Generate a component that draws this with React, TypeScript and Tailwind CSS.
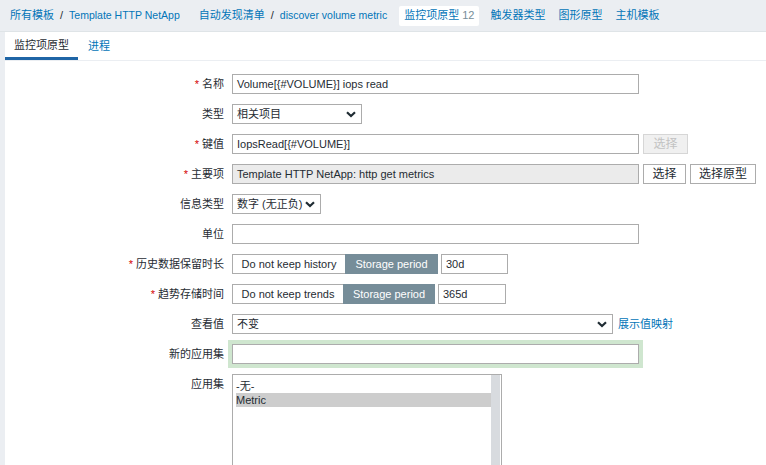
import React from "react";

const font = { fontFamily: '"Liberation Sans", Arial, "Noto Sans CJK SC", sans-serif' };

function Chevron() {
  return (
    <svg width="10" height="7" viewBox="0 0 10 7" className="shrink-0">
      <path d="M1 1.2 L5 5 L9 1.2" fill="none" stroke="#1f2c33" strokeWidth="2.2" />
    </svg>
  );
}

function Label({ text, req }: { text: string; req?: boolean }) {
  return (
    <div className="w-[224px] shrink-0 text-right leading-[20px] text-[#1f2c33]">
      {req && <span className="text-[#d40000]">* </span>}
      {text}
    </div>
  );
}

function Row({ children, label, req }: { children: React.ReactNode; label: string; req?: boolean }) {
  return (
    <div className="flex items-start gap-2">
      <Label text={label} req={req} />
      <div className="flex items-center gap-1">{children}</div>
    </div>
  );
}

function TextBox({ value, w, ro }: { value: string; w: string; ro?: boolean }) {
  return (
    <div
      className={`${w} h-[20px] whitespace-nowrap border border-[#acacac] px-[4px] leading-[18px] text-[#1f2c33] ${
        ro ? "bg-[#ebebeb]" : "bg-white"
      }`}
    >
      {value}
    </div>
  );
}

function Select({ value, w }: { value: string; w: string }) {
  return (
    <div
      className={`${w} flex h-[20px] items-center justify-between whitespace-nowrap border border-[#acacac] bg-white pl-[4px] pr-[5px] text-[#1f2c33]`}
    >
      <span>{value}</span>
      <Chevron />
    </div>
  );
}

function Btn({ text, disabled, w }: { text: string; disabled?: boolean; w: string }) {
  return (
    <div
      className={`${w} flex h-[20px] items-center justify-center border text-[12px] ${
        disabled ? "border-[#d6d6d6] bg-[#f0f0f0] text-[#c2c2c2]" : "border-[#acacac] bg-white text-[#1f2c33]"
      }`}
    >
      {text}
    </div>
  );
}

function Segmented({ left, lw, rw, value, vw }: { left: string; lw: string; rw: string; value: string; vw: string }) {
  return (
    <div className="flex h-[20px] gap-[3px]">
      <div className="flex">
        <div className={`${lw} flex items-center justify-center border border-r-0 border-[#acacac] bg-white text-[#1f2c33]`}>
          {left}
        </div>
        <div className={`${rw} flex items-center justify-center bg-[#768d99] text-white`}>Storage period</div>
      </div>
      <TextBox value={value} w={vw} />
    </div>
  );
}

export default function App() {
  return (
    <div className="h-[465px] w-[766px] overflow-hidden bg-[#ebeef2] text-[11px]" style={font}>
      {/* breadcrumb / navigation */}
      <div className="flex h-[32px] items-center border-b border-[#dfe4e7] pl-[10px] text-[#0275b8]">
        <span>所有模板</span>
        <span className="mx-[6px] text-[#1f2c33]">/</span>
        <span className="text-[10.5px]">Template HTTP NetApp</span>
        <span className="ml-[19px]">自动发现清单</span>
        <span className="mx-[6px] text-[#1f2c33]">/</span>
        <span className="text-[10.5px]">discover volume metric</span>
        <span className="ml-[12px] flex h-[20px] items-center rounded-[2px] bg-white px-[5px]">
          <span>监控项原型</span>
          <span className="ml-[3px] text-[#768d99]">12</span>
        </span>
        <span className="ml-[11px]">触发器类型</span>
        <span className="ml-[13px]">图形原型</span>
        <span className="ml-[13px]">主机模板</span>
      </div>

      <div className="ml-[5px] h-full bg-white">
        {/* tabs */}
        <div className="flex h-[29px] items-end border-b border-[#ebeef2]">
          <div className="flex h-[29px] w-[73px] items-center justify-center border-b-[3px] border-[#1f65a6] pt-[2px] text-[#1f2c33]">
            监控项原型
          </div>
          <div className="flex h-[29px] items-center pl-[10px] pt-[2px] text-[#0275b8]">进程</div>
        </div>

        {/* form */}
        <div className="-ml-[5px] flex flex-col gap-[10px] pt-[13px]">
          <Row label="名称" req>
            <TextBox value="Volume[{#VOLUME}] iops read" w="w-[407px]" />
          </Row>
          <Row label="类型">
            <Select value="相关项目" w="w-[130px]" />
          </Row>
          <Row label="键值" req>
            <TextBox value="IopsRead[{#VOLUME}]" w="w-[407px]" />
            <Btn text="选择" disabled w="w-[45px]" />
          </Row>
          <Row label="主要项" req>
            <TextBox value="Template HTTP NetApp: http get metrics" w="w-[407px]" ro />
            <Btn text="选择" w="w-[43px]" />
            <Btn text="选择原型" w="w-[66px]" />
          </Row>
          <Row label="信息类型">
            <Select value="数字 (无正负)" w="w-[89px]" />
          </Row>
          <Row label="单位">
            <TextBox value="" w="w-[407px]" />
          </Row>
          <Row label="历史数据保留时长" req>
            <Segmented left="Do not keep history" lw="w-[113px]" rw="w-[93px]" value="30d" vw="w-[67px]" />
          </Row>
          <Row label="趋势存储时间" req>
            <Segmented left="Do not keep trends" lw="w-[111px]" rw="w-[92px]" value="365d" vw="w-[68px]" />
          </Row>
          <Row label="查看值">
            <Select value="不变" w="w-[381px]" />
            <span className="ml-[1px] text-[#0275b8]">展示值映射</span>
          </Row>
          <div className="-my-[4px] flex items-start gap-2">
            <div className="w-[224px] shrink-0 pt-[4px] text-right leading-[20px] text-[#1f2c33]">新的应用集</div>
            <div className="-ml-[4px] border-[4px] border-[#cfe6cf]">
              <TextBox value="" w="w-[407px]" />
            </div>
          </div>
          <Row label="应用集">
            <div className="flex h-[200px] w-[270px] border border-[#acacac] bg-white">
              <div className="flex-1 pl-[3px] pt-[4px] leading-[14px] text-[#1f2c33]">
                <div>-无-</div>
                <div className="bg-[#cdcdcd]">Metric</div>
              </div>
              <div className="mr-[1px] w-[9px] bg-[#d8dbdf]" />
            </div>
          </Row>
        </div>
      </div>
    </div>
  );
}
